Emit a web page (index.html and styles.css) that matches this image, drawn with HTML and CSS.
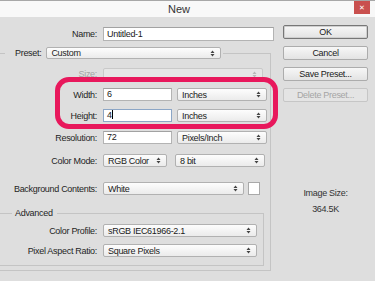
FILE: index.html
```html
<!DOCTYPE html>
<html lang="en">
<head>
    <meta charset="UTF-8">
    <meta name="viewport" content="width=device-width, initial-scale=1.0">
    <title>New</title>
    <link rel="stylesheet" href="styles.css">
</head>
<body>
    <div class="titlebar">
        <div class="spacer"></div>
        <div class="title">New</div>
        <div class="spacer end"><div class="close">&#x2715;</div></div>
    </div>

    <div class="dialog">
        <div class="main">
            <div class="row">
                <div class="lbl lbl-top">Name:</div>
                <div class="input name">Untitled-1</div>
            </div>

            <fieldset class="group outer">
                <legend class="preset">
                    <span class="preset-inner">
                        <span>Preset:</span>
                        <span class="select preset-sel">Custom<svg class="arr" viewBox="0 0 5 7"><path d="M0.5 3L2.5 0.5L4.5 3ZM0.5 4L2.5 6.5L4.5 4Z"/></svg></span>
                    </span>
                </legend>

                <div class="row size-row">
                    <div class="lbl muted">Size:</div>
                    <div class="select disabled size-sel"><svg class="arr" viewBox="0 0 5 7"><path d="M0.5 3L2.5 0.5L4.5 3ZM0.5 4L2.5 6.5L4.5 4Z"/></svg></div>
                </div>
                <div class="row r-width">
                    <div class="lbl">Width:</div>
                    <div class="input short">6</div>
                    <div class="select unit">Inches<svg class="arr" viewBox="0 0 5 7"><path d="M0.5 3L2.5 0.5L4.5 3ZM0.5 4L2.5 6.5L4.5 4Z"/></svg></div>
                </div>
                <div class="row r-height">
                    <div class="lbl">Height:</div>
                    <div class="input short focus">4<span class="caret"></span></div>
                    <div class="select unit">Inches<svg class="arr" viewBox="0 0 5 7"><path d="M0.5 3L2.5 0.5L4.5 3ZM0.5 4L2.5 6.5L4.5 4Z"/></svg></div>
                </div>
                <div class="row r-res">
                    <div class="lbl">Resolution:</div>
                    <div class="input short">72</div>
                    <div class="select unit">Pixels/Inch<svg class="arr" viewBox="0 0 5 7"><path d="M0.5 3L2.5 0.5L4.5 3ZM0.5 4L2.5 6.5L4.5 4Z"/></svg></div>
                </div>
                <div class="row r-mode">
                    <div class="lbl">Color Mode:</div>
                    <div class="select mode">RGB Color<svg class="arr" viewBox="0 0 5 7"><path d="M0.5 3L2.5 0.5L4.5 3ZM0.5 4L2.5 6.5L4.5 4Z"/></svg></div>
                    <div class="select unit bits">8 bit<svg class="arr" viewBox="0 0 5 7"><path d="M0.5 3L2.5 0.5L4.5 3ZM0.5 4L2.5 6.5L4.5 4Z"/></svg></div>
                </div>
                <div class="row r-bg">
                    <div class="lbl">Background Contents:</div>
                    <div class="select bg">White<svg class="arr" viewBox="0 0 5 7"><path d="M0.5 3L2.5 0.5L4.5 3ZM0.5 4L2.5 6.5L4.5 4Z"/></svg></div>
                    <div class="swatch"></div>
                </div>

                <fieldset class="group advanced">
                    <legend class="adv-legend">Advanced</legend>
                    <div class="row r-prof">
                        <div class="lbl">Color Profile:</div>
                        <div class="select prof">sRGB IEC61966-2.1<svg class="arr" viewBox="0 0 5 7"><path d="M0.5 3L2.5 0.5L4.5 3ZM0.5 4L2.5 6.5L4.5 4Z"/></svg></div>
                    </div>
                    <div class="row r-par">
                        <div class="lbl">Pixel Aspect Ratio:</div>
                        <div class="select prof">Square Pixels<svg class="arr" viewBox="0 0 5 7"><path d="M0.5 3L2.5 0.5L4.5 3ZM0.5 4L2.5 6.5L4.5 4Z"/></svg></div>
                    </div>
                </fieldset>
            </fieldset>
        </div>

        <div class="side">
            <div class="btn default">OK</div>
            <div class="btn">Cancel</div>
            <div class="btn">Save Preset...</div>
            <div class="btn disabled">Delete Preset...</div>
            <div class="info">
                <div>Image Size:</div>
                <div>364.5K</div>
            </div>
        </div>
    </div>

    <div class="highlight"></div>
</body>
</html>
```

FILE: styles.css
```css
body {
    margin: 0;
    width: 375px;
    height: 281px;
    overflow: hidden;
    position: relative;
    background: #dedede;
    font-family: "Liberation Sans", Arial, sans-serif;
    font-size: 9px;
    letter-spacing: -0.3px;
    color: #1a1a1a;
}

/* title bar */
.titlebar {
    height: 16px;
    border-top: 1px solid #a7a7a7;
    background: #f8f8f8;
    display: flex;
    align-items: center;
}

.spacer {
    flex: 1;
    align-self: stretch;
}

.spacer.end {
    display: flex;
    justify-content: flex-end;
}

.title {
    font-size: 11px;
    letter-spacing: 0;
    color: #333;
    padding-right: 17px;
}

.close {
    width: 16px;
    height: 13px;
    margin-right: 5px;
    background: #c9504e;
    color: #fff;
    font-size: 7px;
    line-height: 13px;
    text-align: center;
}

/* dialog body */
.dialog {
    display: flex;
}

.main {
    margin-left: -10px;
    width: 282px;
    padding-top: 10px;
}

.row {
    display: flex;
    align-items: center;
}

.lbl {
    width: 105px;
    margin-right: 6px;
    text-align: right;
    color: #1e1e1e;
    white-space: nowrap;
    flex-shrink: 0;
}

.lbl-top {
    width: 107px;
}

.outer .lbl {
    width: 106px;
}

.advanced .lbl {
    width: 105px;
}

.muted {
    color: #a3a3a3;
}

.input {
    height: 11px;
    line-height: 11px;
    padding: 0 3px;
    background: #fff;
    border: 1px solid #b3b3b3;
    border-top-color: #a2a2a2;
    white-space: nowrap;
    flex-shrink: 0;
}

.input.name {
    width: 163px;
    height: 12px;
    line-height: 12px;
}

.input.short {
    width: 61px;
    margin-right: 5px;
}

.input.focus {
    border-color: #8ca6c6;
}

.caret {
    display: inline-block;
    width: 1px;
    height: 9px;
    background: #000;
    vertical-align: -1px;
}

.select {
    display: flex;
    align-items: center;
    box-sizing: border-box;
    height: 13px;
    padding: 0 5px 0 4px;
    background: linear-gradient(#fdfdfd, #ebebeb);
    border: 1px solid #b1b1b1;
    border-radius: 2px;
    white-space: nowrap;
    flex-shrink: 0;
}

.arr {
    width: 5px;
    height: 7px;
    fill: #444;
    margin-left: auto;
}

.select.disabled {
    background: #e6e6e6;
    border-color: #c9c9c9;
}

.select.disabled .arr {
    fill: #b8b8b8;
}

.unit {
    width: 90px;
}

.mode {
    width: 64px;
    margin-right: 8px;
}

.bg {
    width: 141px;
    margin-right: 4px;
}

.swatch {
    width: 10px;
    height: 11px;
    background: #fff;
    border: 1px solid #a9a9a9;
}

.prof {
    width: 154px;
}

/* group boxes */
.group {
    margin: 0;
    padding: 0;
    border: 1px solid #c4c4c4;
    min-width: 0;
}

.outer {
    margin-top: 6px;
    width: 281px;
    box-sizing: border-box;
    padding-bottom: 4px;
}

.preset {
    margin-left: 14px;
    padding: 0 2px 0 10px;
}

.preset-inner {
    display: flex;
    align-items: center;
    gap: 5px;
    color: #1e1e1e;
}

.preset-sel {
    width: 175px;
    height: 12px;
}

.size-row {
    margin-top: 9px;
}

.size-sel {
    width: 160px;
    height: 12px;
}

.r-width {
    margin-top: 8px;
}

.r-height {
    margin-top: 8px;
}

.r-res {
    margin-top: 9px;
}

.r-mode {
    margin-top: 10px;
}

.r-bg {
    margin-top: 15px;
}

.advanced {
    margin-top: 12px;
    margin-right: 6px;
    padding-bottom: 8px;
}

.adv-legend {
    margin-left: 20px;
    padding: 0 4px 0 3px;
    color: #1e1e1e;
    line-height: 12px;
}

.r-prof {
    margin-top: 5px;
}

.r-par {
    margin-top: 7px;
}

/* right column */
.side {
    margin-left: 11px;
    width: 85px;
    padding-top: 8px;
    display: flex;
    flex-direction: column;
    gap: 7px;
}

.btn {
    height: 12px;
    line-height: 12px;
    text-align: center;
    background: linear-gradient(#f7f7f7, #e3e3e3);
    border: 1px solid #acacac;
    border-radius: 2px;
}

.btn.default {
    border-color: #777;
    box-shadow: inset 0 0 0 1px #cfcfcf;
}

.btn.disabled {
    background: #e4e4e4;
    border-color: #c6c6c6;
    color: #a4a4a4;
}

.info {
    margin-top: 76px;
    text-align: center;
    line-height: 16px;
    color: #333;
}

/* annotation drawn over the dialog */
.highlight {
    position: absolute;
    left: 55px;
    top: 77px;
    width: 223px;
    height: 52px;
    box-sizing: border-box;
    border: 5px solid #e8185c;
    border-radius: 14px;
}
```
